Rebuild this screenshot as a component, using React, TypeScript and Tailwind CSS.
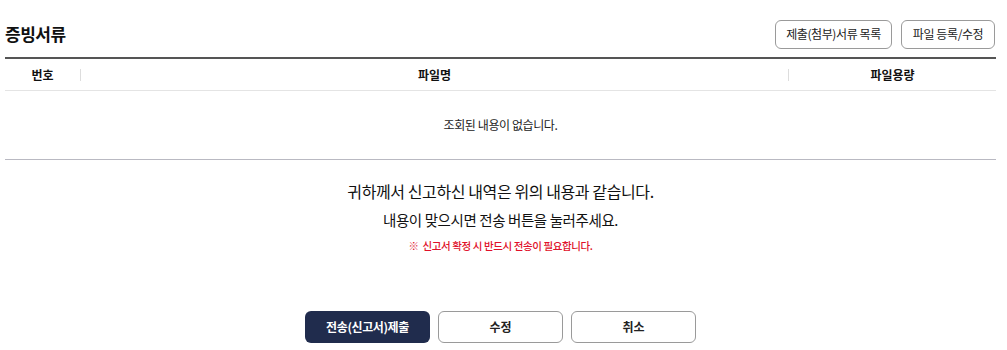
export default function App() {
  return (
    <div className="w-[1007px] h-[350px] bg-white px-[5px] pt-[19px] text-[#111] font-['Noto_Sans_CJK_KR','Noto_Sans',sans-serif] overflow-hidden">
      {/* Title bar */}
      <div className="flex items-center justify-between pr-[7px] h-[30px]">
        <h2 className="text-[17px] font-bold tracking-[-0.5px]">증빙서류</h2>
        <div className="flex gap-[9px]">
          <button className="h-[29px] w-[117px] rounded-[6px] border border-[#9a9a9a] text-[12px] tracking-[-0.4px] text-[#222]">
            제출(첨부)서류 목록
          </button>
          <button className="h-[29px] w-[94px] rounded-[6px] border border-[#9a9a9a] text-[12px] tracking-[-0.4px] text-[#222]">
            파일 등록/수정
          </button>
        </div>
      </div>

      {/* Table */}
      <div className="mt-[8px] mr-[6px] border-t-2 border-[#555]">
        <div className="flex items-center h-[32px] border-b border-[#e4e4e4] text-[12px] font-bold">
          <div className="w-[75px] text-center">번호</div>
          <div className="w-px h-[12px] bg-[#ddd]" />
          <div className="flex-1 text-center">파일명</div>
          <div className="w-px h-[12px] bg-[#ddd]" />
          <div className="w-[207px] text-center">파일용량</div>
        </div>
        <div className="h-[69px] flex items-center justify-center border-b border-[#b9b9c2] text-[12px] text-[#222] tracking-[-0.4px]">
          조회된 내용이 없습니다.
        </div>
      </div>

      {/* Message */}
      <div className="flex flex-col items-center mt-[19px] mr-[6px] tracking-[-0.4px]">
        <p className="text-[16px] leading-[24px] text-[#111]">귀하께서 신고하신 내역은 위의 내용과 같습니다.</p>
        <p className="text-[14.5px] leading-[22px] mt-[6px] text-[#111]">내용이 맞으시면 전송 버튼을 눌러주세요.</p>
        <p className="text-[10.5px] leading-[16px] mt-[7px] text-[#e0102a] font-medium">※&nbsp; 신고서 확정 시 반드시 전송이 필요합니다.</p>
      </div>

      {/* Actions */}
      <div className="flex justify-center gap-[8px] mt-[57px] mr-[6px]">
        <button className="w-[125px] h-[32px] rounded-[6px] bg-[#202c4d] text-white text-[12px] font-bold tracking-[-0.4px]">
          전송(신고서)제출
        </button>
        <button className="w-[125px] h-[32px] rounded-[6px] border border-[#9a9a9a] text-[12px] font-bold text-[#222]">
          수정
        </button>
        <button className="w-[125px] h-[32px] rounded-[6px] border border-[#9a9a9a] text-[12px] font-bold text-[#222]">
          취소
        </button>
      </div>
    </div>
  );
}
